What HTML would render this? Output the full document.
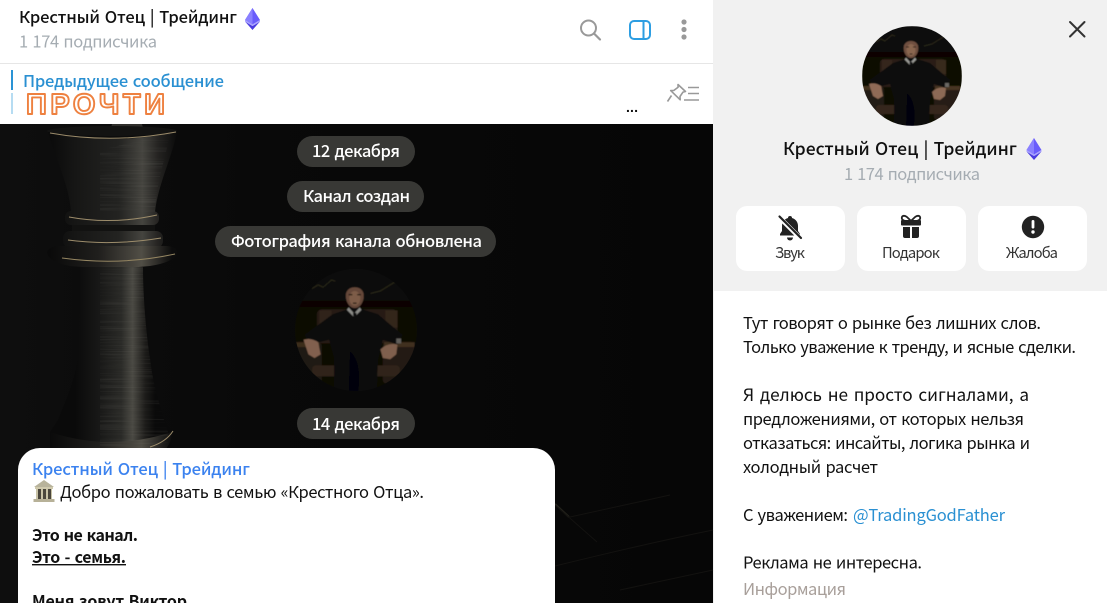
<!DOCTYPE html>
<html lang="ru"><head><meta charset="utf-8"><title>Крестный Отец | Трейдинг</title>
<style>
html,body{margin:0;padding:0;background:#fff;overflow:hidden}
svg{display:block}
text{font-family:"Noto Sans CJK SC","Liberation Sans",sans-serif;font-size:16.5px;fill:#111;word-spacing:1.3px;white-space:pre}
.m{font-weight:500}
.g{fill:#a5acb2}
.p{fill:#fff;font-weight:500;font-size:16.5px;word-spacing:1.5px}
.l{font-size:14.8px;fill:#333}
</style></head><body>
<svg width="1107" height="603" viewBox="0 0 1107 603" xmlns="http://www.w3.org/2000/svg">
<defs>
<linearGradient id="ch" gradientUnits="userSpaceOnUse" x1="46" y1="0" x2="178" y2="0">
<stop offset="0" stop-color="#090909"/><stop offset=".22" stop-color="#161615"/><stop offset=".55" stop-color="#232321"/><stop offset=".73" stop-color="#45443f"/><stop offset=".85" stop-color="#242321"/><stop offset="1" stop-color="#0a0a0a"/>
</linearGradient>
<linearGradient id="st" gradientUnits="userSpaceOnUse" x1="75" y1="0" x2="155" y2="0">
<stop offset="0" stop-color="#0a0a0a"/><stop offset=".3" stop-color="#181817"/><stop offset=".58" stop-color="#2a2a27"/><stop offset=".72" stop-color="#4a4943"/><stop offset=".88" stop-color="#1c1b19"/><stop offset="1" stop-color="#0a0a0a"/>
</linearGradient>
<linearGradient id="bs" gradientUnits="userSpaceOnUse" x1="50" y1="0" x2="172" y2="0">
<stop offset="0" stop-color="#0a0a0a"/><stop offset=".4" stop-color="#201f1d"/><stop offset=".75" stop-color="#514e46"/><stop offset="1" stop-color="#0c0c0c"/>
</linearGradient>
<linearGradient id="bg" x1="0" y1="0" x2="1" y2="0"><stop offset="0" stop-color="#0e0e0e"/><stop offset=".35" stop-color="#090909"/><stop offset="1" stop-color="#060606"/></linearGradient>
<clipPath id="av"><circle cx="50" cy="50" r="50"/></clipPath>
<clipPath id="piece"><path d="M100 150L170 134C165 160 156 185 155 212H100ZM100 266H143C143 300 147 340 150 358 153 385 160 405 164 420L168 432V447H100Z"/></clipPath>
<filter id="soft" x="-5%" y="-5%" width="110%" height="110%"><feGaussianBlur stdDeviation=".4"/></filter>
<filter id="brush" x="0" y="0" width="100%" height="100%"><feTurbulence type="fractalNoise" baseFrequency="0.015 0.7" numOctaves="2" seed="4"/><feColorMatrix values="0 0 0 0 .75 0 0 0 0 .73 0 0 0 0 .66 1.6 0 0 0 -.72"/></filter>
<g id="man">
<g clip-path="url(#av)"><g filter="url(#soft)">
<rect width="100" height="100" fill="#090806"/>
<rect x="0" y="0" width="100" height="26" fill="#100e0a"/>
<path d="M14 16l5-3 4 2 7-6 3 1M62 20l8-2 8-5 5-3" fill="none" stroke="#33301f" stroke-width=".7"/>
<rect x="0" y="26" width="100" height="5" fill="#070605"/>
<rect x="18" y="33" width="66" height="28" rx="4" fill="#2a1e15"/>
<rect x="74" y="34" width="10" height="14" fill="#38291d"/>
<rect x="20" y="34" width="10" height="12" fill="#34271b"/>
<rect x="0" y="60" width="22" height="34" rx="3" fill="#241a12"/>
<rect x="72" y="60" width="26" height="34" rx="3" fill="#261c13"/>
<rect x="0" y="60" width="20" height="4" fill="#43321f"/>
<rect x="73" y="60" width="25" height="4" fill="#463422"/>
<rect x="14" y="79" width="72" height="9" rx="3" fill="#35281a"/>
<path d="M49 31L31 37 8 54 12 62 28 58 32 72 32 100H67L68 74 72 58 84 62 88 54 68 37Z" fill="#0f0f11"/>
<path d="M42 33h14l-3 18-4 4-4-4z" fill="#0a0a0c"/>
<path d="M44 31.500l4.500 5 4.500-5 1.500 2-6 6-6-6z" fill="#9a9a95"/>
<path d="M47.500 36h3l-.5 4h-2z" fill="#0e0e10"/>
<path d="M33 74Q44 62 55 66 64 72 65 100H33Z" fill="#0b0b0d"/>
<path d="M45 67Q55 76 52 100H44Z" fill="#060607"/>
<ellipse cx="49" cy="22" rx="7.300" ry="10" fill="#6f5040"/>
<ellipse cx="49" cy="24" rx="4.500" ry="6" fill="#8a6650"/>
<path d="M41.500 21Q39.500 10.500 49 10 58.500 10.500 56.500 21 55 15 49 15 43 15 41.500 21Z" fill="#0a0807"/>
<path d="M44 21h3M51 21h3M47.500 28h3" stroke="#20150f" stroke-width="1"/>
<path d="M7 58Q13 56 19 60L21 70 16 73 11 70Z" fill="#8f6b56"/>
<path d="M70 66Q76 60 84 62L83 70 78 74 72 73Z" fill="#8c6954"/>
<rect x="83" y="57" width="4" height="4" fill="#6a6863"/>
</g></g></g>
<g id="eth">
<path d="M7.500 0L15 12 7.500 16.500 0 12Z" fill="#6a5cfb"/>
<path d="M7.500 0L0 12 7.500 16.500Z" fill="#8a80ff"/>
<path d="M0 13.500L7.500 18 15 13.500 7.500 22Z" fill="#4a3be0"/>
<path d="M0 12L7.500 16.500 15 12 15 13.500 7.500 18 0 13.500Z" fill="#a8a2ff"/>
</g>
</defs>

<!-- panels -->
<rect width="1107" height="603" fill="#fff"/>
<rect x="713" width="394" height="291" fill="#f1f1f1"/>
<rect x="713" y="291" width="1" height="312" fill="#f1f1f1"/>
<rect y="63" width="713" height="1" fill="#e6e6e6"/>
<rect y="124" width="713" height="479" fill="url(#bg)"/>

<!-- header -->
<text class="m" x="19" y="23" textLength="218">Крестный Отец | Трейдинг</text>
<use href="#eth" x="245" y="8"/>
<text class="g" x="19" y="47.500" textLength="138">1 174 подписчика</text>
<circle cx="588.500" cy="28" r="7.500" fill="none" stroke="#999" stroke-width="2"/>
<path d="M594 33.500L600 39.500" stroke="#999" stroke-width="2.200" stroke-linecap="round"/>
<rect x="630" y="21" width="20" height="18" rx="4" fill="none" stroke="#2d9ee2" stroke-width="2"/>
<path d="M643.500 21v18" stroke="#2d9ee2" stroke-width="2"/>
<circle cx="684" cy="22" r="2.600" fill="#999"/><circle cx="684" cy="29.500" r="2.600" fill="#999"/><circle cx="684" cy="37" r="2.600" fill="#999"/>

<!-- pinned -->
<rect x="11" y="70" width="2" height="20" fill="#2a93d5"/>
<rect x="11" y="93" width="2" height="21" fill="#b6dcf2"/>
<text class="m" x="23" y="87" textLength="201" style="fill:#2a90d2">Предыдущее сообщение</text>
<text x="26" y="114" textLength="139" style="font-family:'Liberation Sans',sans-serif;font-weight:700;font-size:29px;fill:#fff;stroke:#ee8140;stroke-width:1.900px;stroke-linejoin:round">ПРОЧТИ</text>
<text x="626" y="112" style="font-family:'Liberation Sans',sans-serif;font-size:14px;font-weight:700" textLength="12">...</text>
<path d="M678 84.500l7.500 7-2.500.6-3 4.400.2 3.300-9.500-9.200 3.200-.2 4.200-3.200z M671.500 95.500l-4 6" fill="none" stroke="#999" stroke-width="1.600" stroke-linejoin="round"/>
<path d="M688 87.500h11M688 93.500h11M684 100h15" stroke="#999" stroke-width="1.600"/>

<!-- chess piece -->
<path d="M112 124h30l2 8h-34z" fill="#2f2e2b"/>
<ellipse cx="112" cy="131" rx="65" ry="5" fill="#131312"/>
<path d="M48 132Q112 146 177 132C171 160 158 185 155 212H71C69 185 56 160 48 132Z" fill="url(#ch)"/>
<path d="M50 133Q112 144 176 132" fill="none" stroke="#9c8c6b" stroke-width="1"/>
<path d="M72 223h83v10H72z" fill="#121211"/>
<rect x="65" y="211" width="94" height="14" rx="6" fill="url(#ch)"/>
<path d="M69 217Q112 225 157 215" fill="none" stroke="#9c8c6b" stroke-width="1"/>
<rect x="63" y="231" width="100" height="17" rx="7" fill="url(#ch)"/>
<path d="M68 240Q112 246 161 238" fill="none" stroke="#9c8c6b" stroke-width="1"/>
<path d="M47 252Q50 245 65 246H160Q176 245 177 252 176 262 150 266 112 270 70 266 48 262 47 252Z" fill="url(#bs)"/>
<path d="M62 258Q120 266 175 254" fill="none" stroke="#958662" stroke-width="1"/>
<path d="M80 267H143C143 300 147 340 150 358 153 385 160 405 164 420L172 432V450H50V432L58 420C68 395 77 375 78 350 80 325 80 295 80 267Z" fill="url(#st)"/>
<path d="M50 432Q110 452 172 432 172 442 165 450H52Z" fill="url(#bs)"/>
<path d="M150 447Q166 442 173 431" fill="none" stroke="#9c8c6b" stroke-width="1"/>
<g clip-path="url(#piece)"><rect x="100" y="134" width="72" height="316" filter="url(#brush)" opacity=".12"/></g>

<!-- floor -->
<path d="M555 504l14 13" fill="none" stroke="#24231c" stroke-width="2"/>
<path d="M555 505l42 37M555 566Q640 545 713 530M570 517l100-22M620 590l93-20" fill="none" stroke="#131210" stroke-width="1"/>

<!-- service -->
<rect x="297" y="136" width="118" height="31" rx="15.500" fill="#383835"/>
<text class="p" x="312" y="157" textLength="88">12 декабря</text>
<rect x="287" y="181" width="137" height="31" rx="15.500" fill="#383835"/>
<text class="p" x="303" y="202" textLength="107">Канал создан</text>
<rect x="215" y="226" width="281" height="31" rx="15.500" fill="#383835"/>
<text class="p" x="231" y="247" textLength="251">Фотография канала обновлена</text>
<use href="#man" transform="translate(295 269) scale(1.220)" opacity=".9"/>
<rect x="297" y="408" width="118" height="31" rx="15.500" fill="#383835"/>
<text class="p" x="312" y="430" textLength="88">14 декабря</text>

<!-- message -->
<path d="M18 603V470a22 22 0 0 1 22-22H533a22 22 0 0 1 22 22V603Z" fill="#fff"/>
<text class="m" x="32" y="475" textLength="218" style="fill:#3b82ef">Крестный Отец | Трейдинг</text>
<g>
<path d="M44 480L54 487H34Z" fill="#b8b39b"/>
<rect x="35" y="487" width="18" height="2" fill="#cfc9ad"/>
<rect x="36" y="489" width="16" height="10" fill="#c9c3a7"/>
<rect x="38" y="489" width="3" height="10" fill="#4a463c"/><rect x="43" y="489" width="3" height="10" fill="#4a463c"/><rect x="48" y="489" width="3" height="10" fill="#4a463c"/>
<rect x="33.500" y="499" width="21" height="3" fill="#b7b198"/>
</g>
<text x="60" y="498" textLength="364">Добро пожаловать в семью «Крестного Отца».</text>
<text class="m" x="32" y="541" textLength="106" style="font-weight:700;font-size:16px">Это не канал.</text>
<text class="m" x="32" y="563" textLength="94" style="font-weight:700;font-size:16px">Это - семья.</text>
<rect x="32" y="564" width="94" height="1.400" fill="#111"/>
<text class="m" x="32" y="607" textLength="155" style="font-weight:700;font-size:16px">Меня зовут Виктор</text>

<!-- right panel -->
<path d="M1070 22l14.500 14.500M1084.500 22L1070 36.500" stroke="#333" stroke-width="2" stroke-linecap="round"/>
<use href="#man" x="862" y="26"/>
<text class="m" x="783" y="155" textLength="234" style="font-size:17.500px">Крестный Отец | Трейдинг</text>
<use href="#eth" x="1026.500" y="138"/>
<text class="g" x="844" y="180" textLength="136">1 174 подписчика</text>

<rect x="736" y="206" width="109" height="65" rx="11" fill="#fff"/>
<rect x="857" y="206" width="109" height="65" rx="11" fill="#fff"/>
<rect x="978" y="206" width="109" height="65" rx="11" fill="#fff"/>

<!-- bell off -->
<path d="M790 216a2 2 0 0 1 2 2c4 1.200 6 4.500 6 8v5l2 3v1.500H780V234l2-3v-5c0-4 2-6.800 6-8a2 2 0 0 1 2-2z" fill="#222"/>
<path d="M787 237.500a3 3 0 0 0 6 0z" fill="#222"/>
<path d="M779 217L800 238" stroke="#fff" stroke-width="4.500"/>
<path d="M779.500 216.500L801 238" stroke="#222" stroke-width="2.200" stroke-linecap="round"/>

<!-- gift -->
<path d="M906 221c-3.500-.5-4.500-2-4.200-3.500.4-2 3-2.300 5-.6l4.200 4 4.200-4c2-1.700 4.600-1.400 5 .6.300 1.500-.7 3-4.200 3.500" fill="none" stroke="#222" stroke-width="1.800"/>
<rect x="901" y="220" width="20" height="5.500" rx="1" fill="#222"/>
<path d="M903 227h7v11h-5a2 2 0 0 1-2-2zM912 227h7v9a2 2 0 0 1-2 2h-5z" fill="#222"/>

<!-- alert -->
<circle cx="1033" cy="227" r="11.200" fill="#222"/>
<rect x="1031.600" y="220" width="2.800" height="8.500" rx="1.400" fill="#fff"/>
<circle cx="1033" cy="232" r="1.700" fill="#fff"/>

<text class="l" x="775" y="258" textLength="30">Звук</text>
<text class="l" x="882" y="258" textLength="58">Подарок</text>
<text class="l" x="1006" y="258" textLength="52">Жалоба</text>

<text x="743" y="329" textLength="298">Тут говорят о рынке без лишних слов.</text>
<text x="743" y="353" textLength="333">Только уважение к тренду, и ясные сделки.</text>
<text x="743" y="401" textLength="286" style="font-size:17.200px;word-spacing:2px">Я делюсь не просто сигналами, а</text>
<text x="743" y="425" textLength="281">предложениями, от которых нельзя</text>
<text x="743" y="449" textLength="287">отказаться: инсайты, логика рынка и</text>
<text x="743" y="473" textLength="135">холодный расчет</text>
<text x="743" y="521" textLength="105">С уважением:</text>
<text x="853" y="521" textLength="152" style="fill:#2a90d2">@TradingGodFather</text>
<text x="743" y="568.500" textLength="179">Реклама не интересна.</text>
<text x="743" y="595" textLength="103" style="fill:#a89f9a">Информация</text>
</svg>
</body></html>
